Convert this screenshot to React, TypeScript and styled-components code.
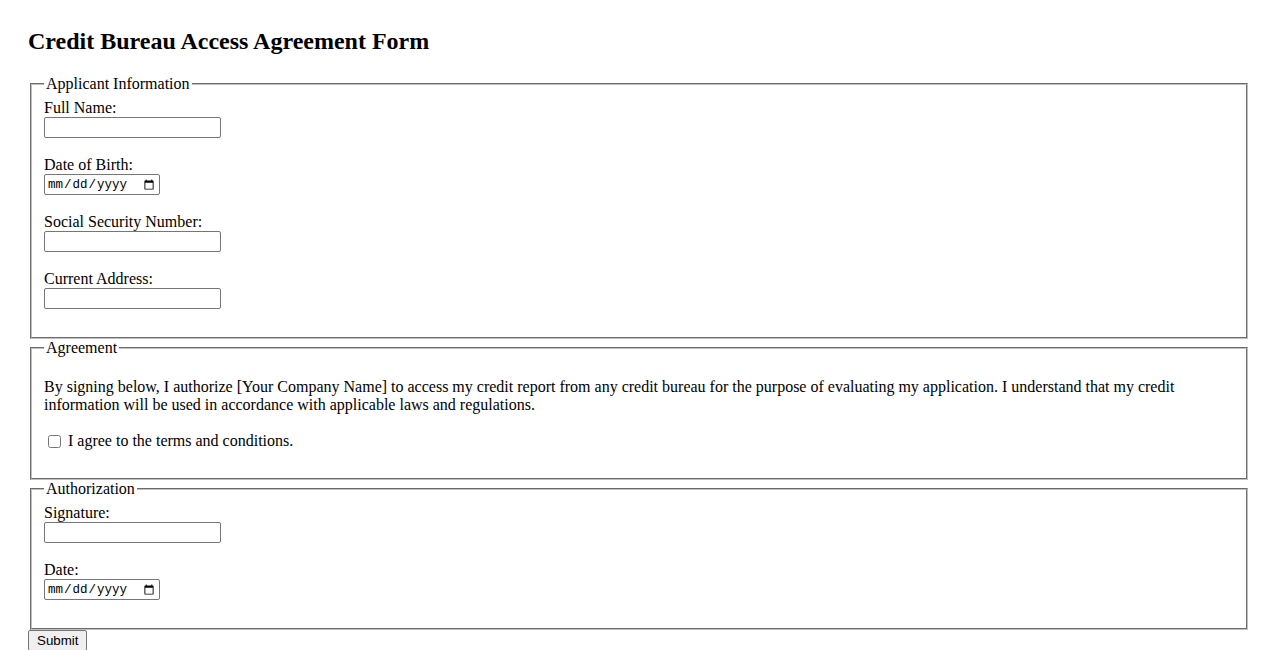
import styled, { createGlobalStyle } from 'styled-components';

const GlobalStyle = createGlobalStyle`
  html {
    overflow: hidden;
  }

  body {
    margin: 0;
    padding: 28px;
    font-family: 'Liberation Serif', 'Times New Roman', serif;
    font-size: 16px;
    color: #000;
    background: #fff;
  }
`;

const Page = styled.main`
  display: flex;
  flex-direction: column;
`;

const Title = styled.h2`
  margin: 0 0 20px;
  font-size: 24px;
  font-weight: bold;
  line-height: 27px;
`;

const Form = styled.form`
  display: flex;
  flex-direction: column;
  align-items: flex-start;
`;

const Section = styled.fieldset`
  align-self: stretch;
  margin: 0 2px;
  padding: 5.6px 12px 10px;
  border: 2px groove rgb(192, 192, 192);
  min-width: 0;
`;

const Legend = styled.legend`
  padding: 0 2px;
  line-height: 18px;
`;

const Field = styled.div`
  display: flex;
  flex-direction: column;
  align-items: flex-start;
  margin-bottom: 18px;
`;

const Label = styled.label`
  display: block;
  line-height: 18px;
`;

const TextInput = styled.input`
  box-sizing: border-box;
  width: 177px;
  height: 21px;
  margin: 0;
  padding: 1px 2px;
  border: 1px solid #767676;
  border-radius: 2px;
  font-family: 'Liberation Sans', Arial, sans-serif;
  font-size: 13.33px;
`;

const DateInput = styled(TextInput)`
  width: 116px;
  padding-top: 3px;
  font-family: 'Liberation Mono', 'DejaVu Sans Mono', monospace;
  font-size: 12.5px;
`;

const Paragraph = styled.p`
  margin: 16px 0;
  line-height: 18px;
`;

const CheckRow = styled.div`
  display: flex;
  align-items: center;
  height: 18px;
  padding-top: 2px;
  margin-bottom: 18px;
`;

const Checkbox = styled.input`
  width: 13px;
  height: 13px;
  margin: 0 3px 0 4px;
`;

const CheckLabel = styled.label`
  margin-left: 4px;
  line-height: 18px;
`;

const SubmitButton = styled.button`
  box-sizing: border-box;
  height: 21px;
  margin: 0;
  padding: 1px 8px;
  border: 1px solid #767676;
  border-radius: 2px;
  background: #efefef;
  font-family: 'Liberation Sans', Arial, sans-serif;
  font-size: 13.33px;
  color: #000;
`;

const App = () => (
  <Page>
    <GlobalStyle />
    <Title>Credit Bureau Access Agreement Form</Title>
    <Form onSubmit={(e) => e.preventDefault()}>
      <Section>
        <Legend>Applicant Information</Legend>
        <Field>
          <Label htmlFor="fullName">Full Name:</Label>
          <TextInput id="fullName" type="text" />
        </Field>
        <Field>
          <Label htmlFor="dob">Date of Birth:</Label>
          <DateInput id="dob" type="date" />
        </Field>
        <Field>
          <Label htmlFor="ssn">Social Security Number:</Label>
          <TextInput id="ssn" type="text" />
        </Field>
        <Field>
          <Label htmlFor="address">Current Address:</Label>
          <TextInput id="address" type="text" />
        </Field>
      </Section>

      <Section>
        <Legend>Agreement</Legend>
        <Paragraph>
          By signing below, I authorize [Your Company Name] to access my credit report from any
          credit bureau for the purpose of evaluating my application. I understand that my credit
          information will be used in accordance with applicable laws and regulations.
        </Paragraph>
        <CheckRow>
          <Checkbox id="agree" type="checkbox" />
          <CheckLabel htmlFor="agree">I agree to the terms and conditions.</CheckLabel>
        </CheckRow>
      </Section>

      <Section>
        <Legend>Authorization</Legend>
        <Field>
          <Label htmlFor="signature">Signature:</Label>
          <TextInput id="signature" type="text" />
        </Field>
        <Field>
          <Label htmlFor="date">Date:</Label>
          <DateInput id="date" type="date" />
        </Field>
      </Section>

      <SubmitButton type="submit">Submit</SubmitButton>
    </Form>
  </Page>
);

export default App;
